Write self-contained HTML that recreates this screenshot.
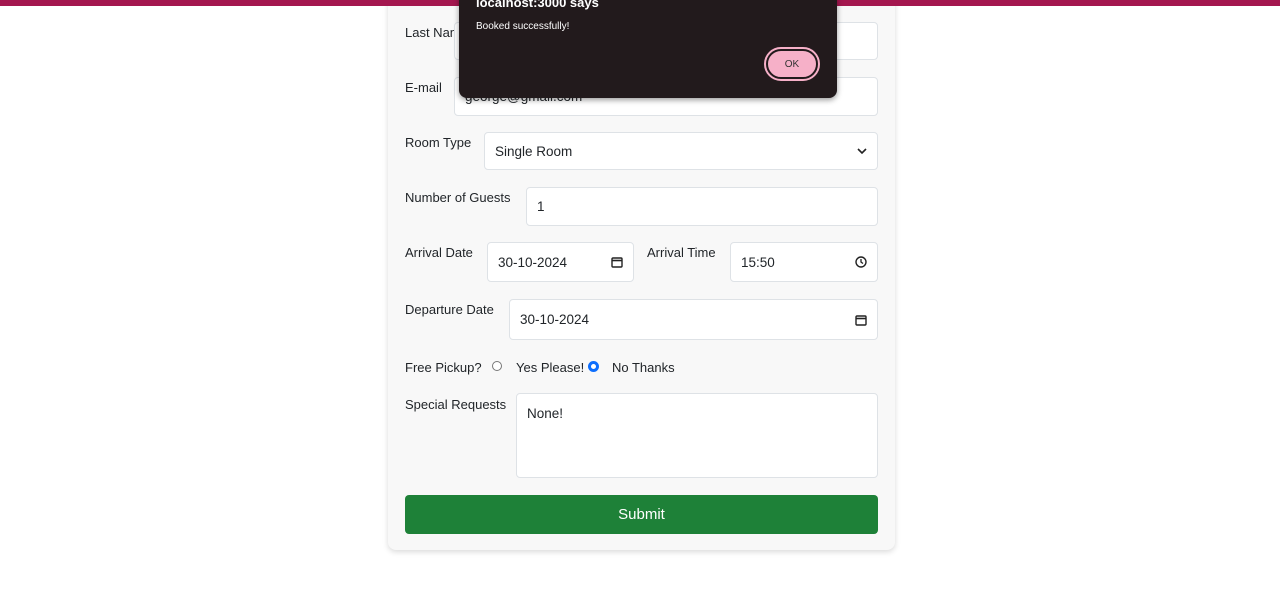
<!DOCTYPE html>
<html><head><meta charset="utf-8"><style>
body{margin:0;width:1280px;height:589px;background:#fff;font-family:"Liberation Sans",sans-serif;position:relative;overflow:hidden;color:#212529}
.top{position:absolute;left:0;top:0;width:1280px;height:6px;background:#a4174f;z-index:5}
.card{position:absolute;left:388px;top:-10px;width:507px;height:560px;background:#f8f8f8;border-radius:8px;box-shadow:0 2px 6px rgba(0,0,0,.15)}
.l{position:absolute;font-size:13px;color:#212529}
.in{position:absolute;background:#fff;border:1px solid #dee2e6;border-radius:4px;font-size:13.5px;box-sizing:border-box;padding-left:10px;display:flex;align-items:center}
.ic{position:absolute;right:10px;top:50%;transform:translateY(-50%)}
.dlg{position:absolute;left:459px;top:-10px;width:378px;height:108px;background:#221a1c;border-radius:8px;box-shadow:0 2px 6px rgba(0,0,0,.4);color:#fff;z-index:6}
.ok{position:absolute;left:307px;top:59px;width:52px;height:30px;border-radius:16px;background:#f6b0c8;border:2px solid #221a1c;outline:2px solid #f6b0c8;box-sizing:border-box;color:#333;font-size:10px;display:flex;align-items:center;justify-content:center}
.btn{position:absolute;left:405px;top:495px;width:473px;height:39px;background:#1e8138;border-radius:4px;color:#fff;font-size:15px;display:flex;align-items:center;justify-content:center}
.r{position:absolute;width:10px;height:10px;border-radius:50%;border:1px solid #777;box-sizing:border-box;top:361px;background:#fff}
</style></head><body>
<div class="top"></div>
<div class="card"></div>
<div class="l" style="left:405px;top:25px">Last Name</div>
<div class="in" style="left:454px;top:22px;width:424px;height:38px"></div>
<div class="l" style="left:405px;top:80px">E-mail</div>
<div class="in" style="left:454px;top:77px;width:424px;height:39px">george@gmail.com</div>
<div class="l" style="left:405px;top:135px">Room Type</div>
<div class="in" style="left:484px;top:132px;width:394px;height:38px">Single Room<svg class="ic" width="10" height="8" viewBox="0 0 10 8"><path d="M1 2l4 4 4-4" stroke="#222" stroke-width="1.6" fill="none"/></svg></div>
<div class="l" style="left:405px;top:190px">Number of Guests</div>
<div class="in" style="left:526px;top:187px;width:352px;height:39px">1</div>
<div class="l" style="left:405px;top:245px">Arrival Date</div>
<div class="in" style="left:487px;top:242px;width:147px;height:40px">30-10-2024<svg class="ic" width="12" height="12" viewBox="0 0 12 12"><rect x="1" y="2" width="10" height="9" rx="1" stroke="#222" stroke-width="1.4" fill="none"/><path d="M1 4.5h10" stroke="#222" stroke-width="1.6"/></svg></div>
<div class="l" style="left:647px;top:245px">Arrival Time</div>
<div class="in" style="left:730px;top:242px;width:148px;height:40px">15:50<svg class="ic" width="12" height="12" viewBox="0 0 12 12"><circle cx="6" cy="6" r="5" stroke="#222" stroke-width="1.4" fill="none"/><path d="M6 3v3l2 1.5" stroke="#222" stroke-width="1.3" fill="none"/></svg></div>
<div class="l" style="left:405px;top:302px">Departure Date</div>
<div class="in" style="left:509px;top:299px;width:369px;height:41px">30-10-2024<svg class="ic" width="12" height="12" viewBox="0 0 12 12"><rect x="1" y="2" width="10" height="9" rx="1" stroke="#222" stroke-width="1.4" fill="none"/><path d="M1 4.5h10" stroke="#222" stroke-width="1.6"/></svg></div>
<div class="l" style="left:405px;top:360px">Free Pickup?</div>
<div class="r" style="left:492px"></div>
<div class="l" style="left:516px;top:360px">Yes Please!</div>
<div class="r" style="left:588px;width:11px;height:11px;border:3px solid #0d6efd"></div>
<div class="l" style="left:612px;top:360px">No Thanks</div>
<div class="l" style="left:405px;top:397px">Special Requests</div>
<div class="in" style="left:516px;top:393px;width:362px;height:85px;align-items:flex-start;padding-top:12px">None!</div>
<div class="btn">Submit</div>
<div class="dlg">
<div style="position:absolute;left:17px;top:5px;font-size:13px;font-weight:bold">localhost:3000 says</div>
<div style="position:absolute;left:17px;top:31px;font-size:10px">Booked successfully!</div>
<div class="ok">OK</div>
</div>
</body></html>
